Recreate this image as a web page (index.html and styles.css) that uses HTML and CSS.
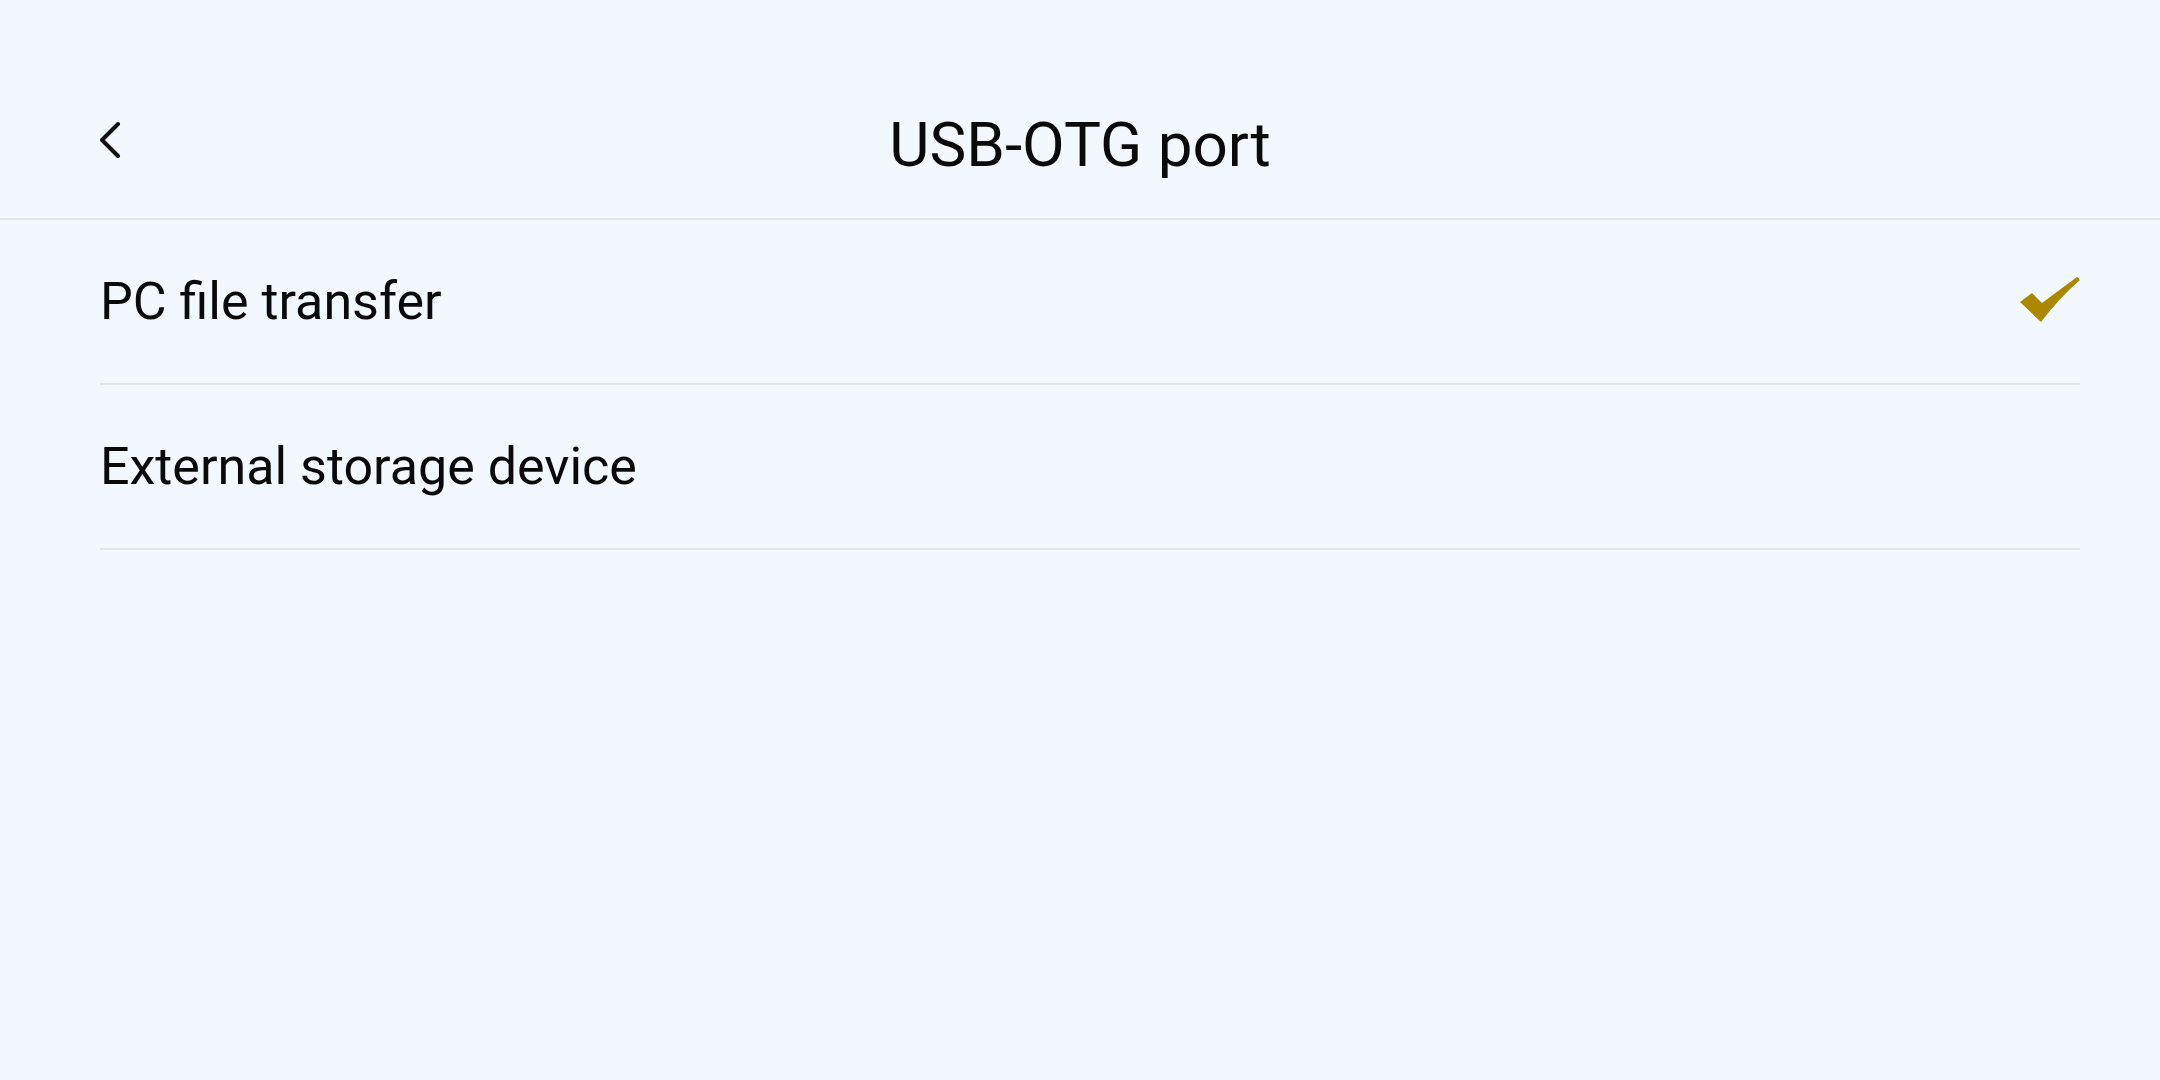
FILE: index.html
```html
<!DOCTYPE html>
<html lang="en">
<head>
<meta charset="utf-8">
<title>USB-OTG port</title>
<link rel="stylesheet" href="styles.css">
</head>
<body>
<div class="page">
  <header class="header">
    <div class="bar">
      <button class="back" aria-label="Back">
        <svg width="22" height="42" viewBox="0 0 22 42"><polyline points="18,5 2,21 18,37" fill="none" stroke="#111" stroke-width="4" stroke-linecap="round" stroke-linejoin="round"/></svg>
      </button>
      <h1 class="title">USB-OTG port</h1>
    </div>
  </header>
  <ul class="list">
    <li class="item">
      <span class="label">PC file transfer</span>
      <svg class="check" width="62" height="50" viewBox="0 0 62 50"><path d="M2 28 L14 19 L24 29 L59 3 Q61 3 61.5 6.5 Q43 22 23 48 Z" fill="#ab8800"/></svg>
    </li>
    <li class="item">
      <span class="label">External storage device</span>
    </li>
  </ul>
</div>
</body>
</html>
```

FILE: styles.css
```css
* { box-sizing: border-box; }
html, body {
  margin: 0;
  padding: 0;
  background: #f3f8fe;
}
body {
  font-family: Roboto, "Noto Sans", "Liberation Sans", sans-serif;
  color: #0a0a0a;
  width: 2160px;
  height: 1080px;
  overflow: hidden;
}
.header {
  height: 220px;
  padding-top: 85px;
  border-bottom: 2px solid #dfe5ee;
}
.bar {
  position: relative;
  display: flex;
  align-items: center;
  justify-content: center;
  height: 120px;
  padding: 0 100px;
}
.back {
  position: absolute;
  left: 100px;
  top: 34px;
  border: 0;
  background: none;
  padding: 0;
  display: flex;
}
.title {
  margin: 0;
  font-size: 62px;
  font-weight: 400;
  line-height: 1;
}
.list {
  list-style: none;
  margin: 0 80px 0 100px;
  padding: 0;
}
.item {
  display: flex;
  align-items: center;
  justify-content: space-between;
  height: 165px;
  border-bottom: 2px solid #dfe5ee;
}
.label {
  font-size: 52px;
  line-height: 1;
}
.check {
  display: block;
  margin-right: 0;
  margin-top: -6px;
}
```
